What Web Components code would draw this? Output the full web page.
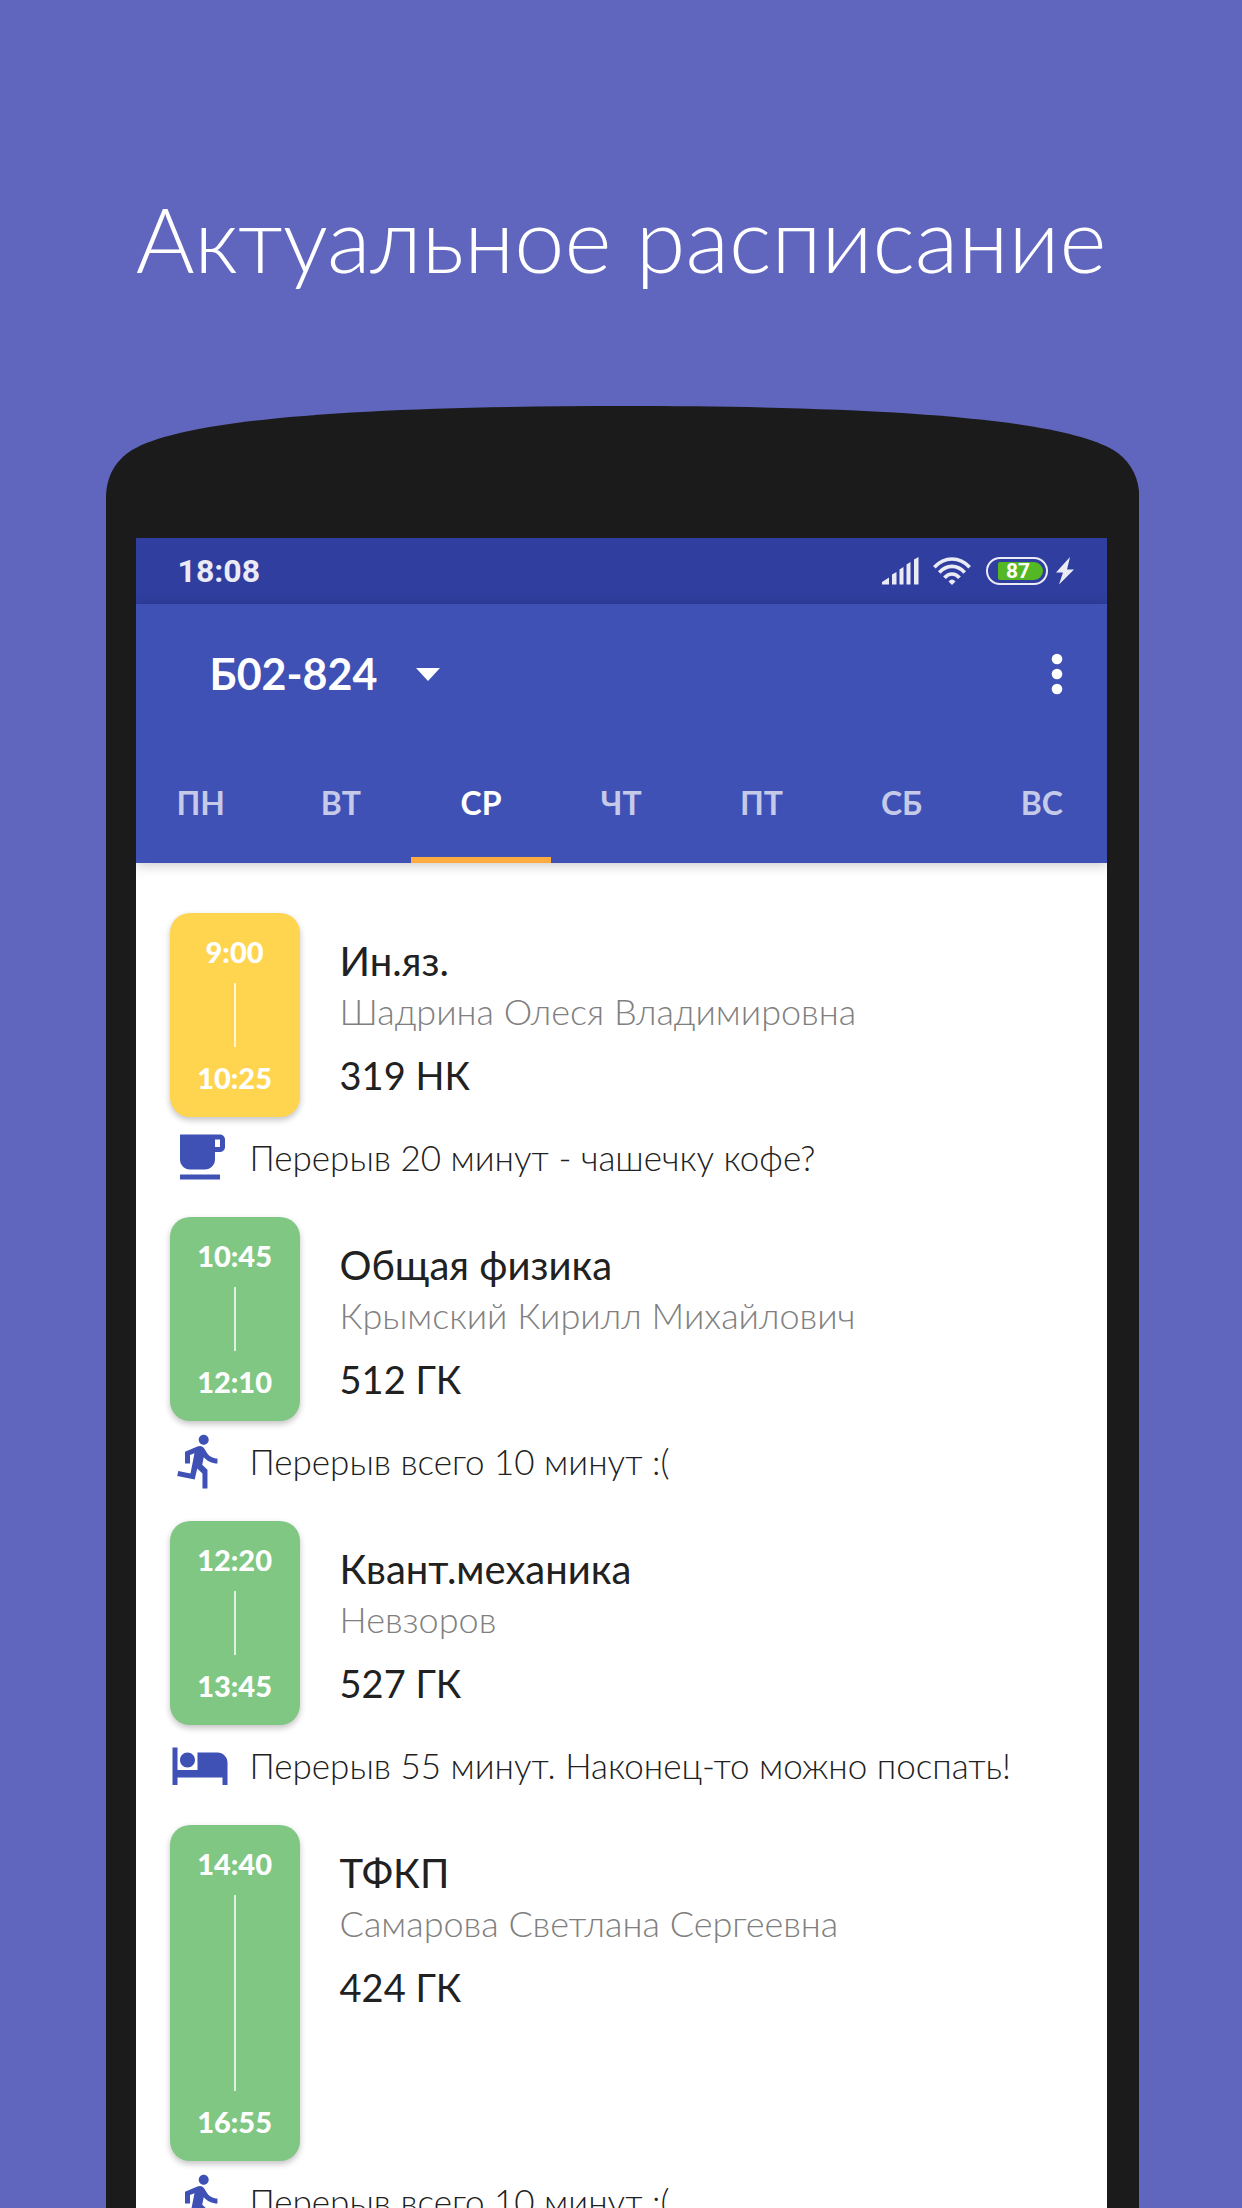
<!DOCTYPE html>
<html lang="ru">
<head>
<meta charset="utf-8">
<meta name="viewport" content="width=device-width, initial-scale=1">
<title>Актуальное расписание</title>
<style>
  body { margin: 0; background: #6066bd; font-family: Lato, "Open Sans", sans-serif; }
</style>
</head>
<body>
<promo-poster>
  <span slot="title">Актуальное расписание</span>
  <phone-frame>
    <status-bar time="18:08" battery="87"></status-bar>
    <app-header group="Б02-824" active="СР"></app-header>
    <schedule-list>
      <lesson-row start="9:00" end="10:25" tone="yellow">
        <span slot="subject">Ин.яз.</span>
        <span slot="teacher">Шадрина Олеся Владимировна</span>
        <span slot="room">319 НК</span>
      </lesson-row>
      <break-row icon="cup">Перерыв 20 минут - чашечку кофе?</break-row>
      <lesson-row start="10:45" end="12:10">
        <span slot="subject">Общая физика</span>
        <span slot="teacher">Крымский Кирилл Михайлович</span>
        <span slot="room">512 ГК</span>
      </lesson-row>
      <break-row icon="run">Перерыв всего 10 минут :(</break-row>
      <lesson-row start="12:20" end="13:45">
        <span slot="subject">Квант.механика</span>
        <span slot="teacher">Невзоров</span>
        <span slot="room">527 ГК</span>
      </lesson-row>
      <break-row icon="bed">Перерыв 55 минут. Наконец-то можно поспать!</break-row>
      <lesson-row start="14:40" end="16:55" long>
        <span slot="subject">ТФКП</span>
        <span slot="teacher">Самарова Светлана Сергеевна</span>
        <span slot="room">424 ГК</span>
      </lesson-row>
      <break-row icon="run">Перерыв всего 10 минут :(</break-row>
    </schedule-list>
  </phone-frame>
</promo-poster>

<script>
class BaseElement extends HTMLElement {
  connectedCallback() {
    if (!this.shadowRoot) this.attachShadow({ mode: 'open' }).innerHTML = this.render();
  }
}

customElements.define('promo-poster', class extends BaseElement {
  render() {
    return `<style>
      :host { display: flex; flex-direction: column; height: 100vh; overflow: hidden; }
      h1 { margin: 0; padding: 178px 0 108px; text-align: center; color: #fff;
           font-size: 90px; line-height: 120px; font-weight: 300; }
    </style>
    <h1><slot name="title"></slot></h1>
    <slot></slot>`;
  }
});

customElements.define('phone-frame', class extends BaseElement {
  render() {
    return `<style>
      :host { display: flex; flex-direction: column; flex: 1 0 auto; margin: 0 8.3% 0 8.5%; }
      svg { display: block; width: 100%; height: 132px; }
      .bezel { flex: 1; background: #1b1b1b; padding: 0 32px 0 30px; }
      .screen { background: #fff; min-height: 100%; overflow: hidden; }
    </style>
    <svg viewBox="0 0 1034 132" preserveAspectRatio="none" aria-hidden="true">
      <path fill="#1b1b1b" d="M0 132V92C0 70 10 54 26 44C80 12 260 0 517 0S954 12 1008 44C1024 54 1034 70 1034 92V132Z"/>
    </svg>
    <div class="bezel"><div class="screen"><slot></slot></div></div>`;
  }
});

customElements.define('status-bar', class extends BaseElement {
  render() {
    return `<style>
      :host { display: flex; align-items: center; justify-content: space-between; height: 66px;
              padding: 0 33px 0 42px; background: #303e9f; color: #ebebf6; font-family: Roboto, sans-serif; }
      time { font-size: 32px; line-height: 40px; font-weight: 700; }
      .icons { display: flex; align-items: center; }
      svg { display: block; fill: currentColor; }
      .signal { margin-right: 14px; }
      .wifi { margin-right: 15px; }
      .battery { display: flex; box-sizing: border-box; width: 62px; height: 28px; margin-right: 8px; padding: 3px;
                 border: 2px solid currentColor; border-radius: 14px; }
      .level { flex: 1; margin-left: 7px; border-radius: 2px 9px 9px 2px; background: #54b724;
               font-size: 21px; line-height: 18px; font-weight: 700; padding-left: 8px; color: #fff; }
    </style>
    <time>${this.getAttribute('time')}</time>
    <div class="icons">
      <svg class="signal" width="37" height="28" viewBox="0 0 37 28" aria-hidden="true">
        <path d="M0 27.500V25L7 20.500V27.500ZM10 27.500V17.500L14.500 15V27.500ZM17.500 27.500V12.500L21.500 10V27.500ZM24.500 27.500V7.500L28.500 5V27.500ZM32 27.500V2.500L36.500 0V27.500Z"/>
      </svg>
      <svg class="wifi" width="38" height="28" viewBox="0 0 38 28" aria-hidden="true">
        <g fill="none" stroke="currentColor" stroke-width="3.600">
          <path d="M1.300 10.300C11.500 -.7 26.500 -.7 36.700 10.300"/>
          <path d="M6.300 15.500C13.500 7.300 24.500 7.300 31.700 15.500"/>
          <path d="M11.500 20.800C16 15.700 22 15.700 26.500 20.800"/>
        </g>
        <path d="M15.500 24.500Q19 20.500 22.500 24.500L19 28Z"/>
      </svg>
      <div class="battery"><span class="level">${this.getAttribute('battery')}</span></div>
      <svg width="18" height="28" viewBox="0 0 18 28" aria-hidden="true"><path d="M14 0L0 15.500H7L3 27.500L18 12.500H11Z"/></svg>
    </div>`;
  }
});

customElements.define('app-header', class extends BaseElement {
  render() {
    const active = this.getAttribute('active');
    const tabs = ['ПН', 'ВТ', 'СР', 'ЧТ', 'ПТ', 'СБ', 'ВС']
      .map(d => `<button role="tab" aria-selected="${d === active}">${d}</button>`).join('');
    return `<style>
      :host { display: block; background: #3f51b5; color: #fff; box-shadow: 0 2px 12px rgba(0,0,0,.22); }
      .bar { display: flex; align-items: center; justify-content: space-between; height: 140px; padding: 0 34px 0 74px; }
      .picker { display: flex; align-items: center; gap: 38px; }
      select, button { appearance: none; border: 0; background: none; margin: 0; padding: 0; color: inherit; font-family: inherit; }
      select { font-size: 43px; line-height: 56px; font-weight: 700; }
      svg { display: block; fill: currentColor; }
      .tabs { display: flex; height: 119px; margin: 0 -5px; }
      .tabs button { flex: 1; box-sizing: border-box; padding-top: 4px; border-bottom: 6px solid transparent;
                     font-size: 32px; line-height: 40px; font-weight: 700; color: #c5cae9; }
      .tabs [aria-selected="true"] { color: #fff; border-color: #ffab40; }
    </style>
    <div class="bar">
      <label class="picker">
        <select aria-label="Группа"><option>${this.getAttribute('group')}</option></select>
        <svg width="24" height="13" viewBox="0 0 24 13" aria-hidden="true"><path d="M0 0H24L12 13Z"/></svg>
      </label>
      <button aria-label="Меню">
        <svg width="32" height="44" viewBox="0 0 32 44"><circle cx="16" cy="7" r="5.300"/><circle cx="16" cy="22" r="5.300"/><circle cx="16" cy="37" r="5.300"/></svg>
      </button>
    </div>
    <div class="tabs" role="tablist">${tabs}</div>`;
  }
});

customElements.define('schedule-list', class extends BaseElement {
  render() {
    return `<style>:host { display: block; padding: 50px 34px 0; }</style><slot></slot>`;
  }
});

customElements.define('lesson-row', class extends BaseElement {
  render() {
    return `<style>
      :host { display: flex; gap: 40px; height: 204px; }
      :host([long]) { height: 336px; }
      .slot { display: flex; flex-direction: column; align-items: center; justify-content: space-between; box-sizing: border-box;
              width: 130px; padding: 20px 0; border-radius: 20px; background: #81c784; color: #fff;
              box-shadow: 0 3px 6px rgba(0,0,0,.24); font-size: 29px; line-height: 38px; font-weight: 900; }
      :host([tone="yellow"]) .slot { background: #ffd54f; }
      i { flex: 1; width: 2px; margin: 12px 0; background: rgba(255,255,255,.75); }
      .info { flex: 1; min-width: 0; color: #212121; }
      div { white-space: nowrap; }
      .subject { padding-top: 22px; font-size: 40px; line-height: 52px; }
      .teacher { font-size: 36px; line-height: 48px; font-weight: 300; color: #808080; }
      .room { padding-top: 14px; font-size: 38px; line-height: 52px; }
    </style>
    <div class="slot"><time>${this.getAttribute('start')}</time><i></i><time>${this.getAttribute('end')}</time></div>
    <div class="info">
      <div class="subject"><slot name="subject"></slot></div>
      <div class="teacher"><slot name="teacher"></slot></div>
      <div class="room"><slot name="room"></slot></div>
    </div>`;
  }
});

const BREAK_ICONS = {
  cup: 'M20 3H4v10c0 2.210 1.790 4 4 4h6c2.210 0 4-1.790 4-4v-3h2c1.110 0 2-.9 2-2V5c0-1.110-.89-2-2-2zm0 5h-2V5h2v3zM4 19h16v2H4z',
  run: 'M13.490 5.480c1.100 0 2-.9 2-2s-.9-2-2-2-2 .9-2 2 .9 2 2 2zm-3.600 13.900l1-4.400 2.100 2v6h2v-7.500l-2.100-2 .6-3c1.300 1.500 3.300 2.500 5.500 2.500v-2c-1.900 0-3.500-1-4.300-2.400l-1-1.600c-.4-.6-1-1-1.700-1-.3 0-.5.1-.8.1l-5.200 2.200v4.700h2v-3.400l1.800-.7-1.600 8.100-4.900-1-.4 2 7 1.400z',
  bed: 'M7 13c1.660 0 3-1.340 3-3S8.660 7 7 7s-3 1.340-3 3 1.340 3 3 3zm12-6h-8v7H3V5H1v15h2v-3h18v3h2v-9c0-2.210-1.790-4-4-4z'
};

customElements.define('break-row', class extends BaseElement {
  render() {
    return `<style>
      :host { display: flex; align-items: center; gap: 20px; box-sizing: border-box; height: 100px; padding-bottom: 20px;
              font-size: 35px; line-height: 48px; font-weight: 300; color: #212121; white-space: nowrap; }
      svg { flex: none; fill: #3f51b5; }
    </style>
    <svg width="60" height="60" viewBox="0 0 24 24" aria-hidden="true"><path d="${BREAK_ICONS[this.getAttribute('icon')]}"/></svg>
    <span><slot></slot></span>`;
  }
});
</script>
</body>
</html>
